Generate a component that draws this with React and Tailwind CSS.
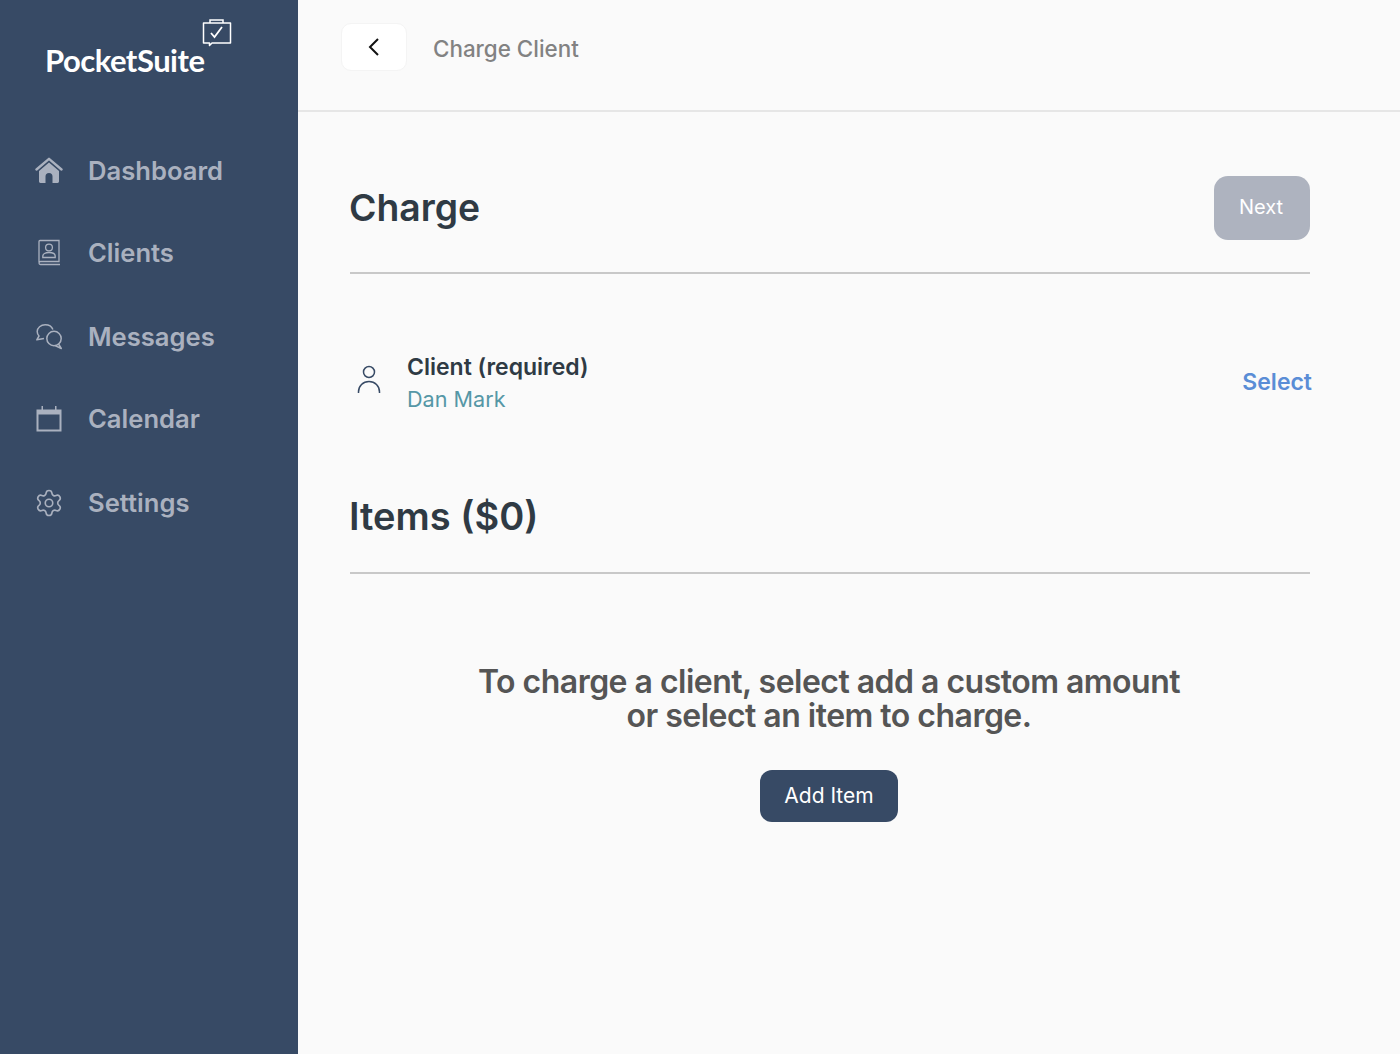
import React from "react";
import { Settings } from "lucide-react";

const Home = () => (
  <svg width="28" height="28" viewBox="0 0 28 28" fill="none">
    <path d="M1.500 12.500 14 1.800l12.500 10.700" stroke="#AAB1BF" strokeWidth="2.400" strokeLinecap="round" strokeLinejoin="round" />
    <path d="M4 14 14 5.600 24 14v10.500a1.400 1.400 0 0 1-1.400 1.400H17.500V19.500a3.500 3.500 0 0 0-7 0V25.900H5.400A1.400 1.400 0 0 1 4 24.500z" fill="#AAB1BF" />
  </svg>
);
const Book = () => (
  <svg width="28" height="28" viewBox="0 0 28 28" fill="none" stroke="#AAB1BF" strokeWidth="1.300">
    <path d="M4 23V2.500A1 1 0 0 1 5 1.500h19v21H5.500A1.500 1.500 0 0 0 4 24a1.500 1.500 0 0 0 1.500 1.500h19.500" />
    <circle cx="14" cy="8.500" r="3.400" />
    <path d="M7.800 18.500v-1.300c0-2.300 2.500-3.700 6.200-3.700s6.200 1.400 6.200 3.700v1.300z" />
  </svg>
);
const Chat = () => (
  <svg width="28" height="28" viewBox="0 0 28 28" fill="none" stroke="#AAB1BF" strokeWidth="1.500" strokeLinejoin="round">
    <path d="M9 15.500 1.800 16.800 4 13C2.800 11.700 2.200 10.200 2.200 8.600 2.200 4.800 5.800 1.800 10.200 1.800c3.600 0 6.700 2 7.700 4.800" />
    <circle cx="19" cy="15.500" r="7.200" />
    <path d="M23.500 21l2.800 4.500-6.300-3" />
  </svg>
);
const Cal = () => (
  <svg width="28" height="28" viewBox="0 0 28 28" fill="none">
    <path d="M1.500 4.500h5V1h1.500v3.500h12V1H21.500v3.500h5V26.500h-25z" fill="#AAB1BF" />
    <rect x="3.500" y="9.500" width="21" height="15" fill="#374A65" />
  </svg>
);
const Gear = () => <Settings size={30} strokeWidth={1.300} color="#AAB1BF" className="mx-[-1px]" />;

const items = [
  { label: "Dashboard", Icon: Home, m: "mt-[11px]" },
  { label: "Clients", Icon: Book, m: "mt-[22px]" },
  { label: "Messages", Icon: Chat, m: "mt-[24px]" },
  { label: "Calendar", Icon: Cal, m: "mt-[22px]" },
  { label: "Settings", Icon: Gear, m: "mt-[24px]" },
];

export default function App() {
  return (
    <div className="flex min-h-[1054px] bg-[#FAFAFA] font-['Inter',sans-serif]">
      <aside className="w-[298px] shrink-0 bg-[#374A65]">
        <div className="relative h-[130px]">
          <span className="absolute left-[45px] top-[41px] text-[31px] leading-[38px] font-bold tracking-[-0.5px] text-white font-['Lato',sans-serif]">
            PocketSuite
          </span>
          <svg className="absolute left-[202px] top-[18px]" width="30" height="30" viewBox="0 0 30 30" fill="none" stroke="white" strokeWidth="1.500">
            <path d="M8 5V2h13v3" />
            <path d="M1.500 5h27v20H10l-2.500 2.500V25h-6z" strokeLinejoin="round" />
            <path d="M9 15l3.500 4L20 9" strokeWidth="1.800" />
          </svg>
        </div>
        <nav className="flex flex-col">
          {items.map(({ label, Icon, m }) => (
            <div key={label} className={`flex h-[60px] items-center pl-[35px] ${m}`}>
              <Icon />
              <span className="ml-[25px] text-[25.6px] font-semibold text-[#AAB1BF]">{label}</span>
            </div>
          ))}
        </nav>
      </aside>
      <main className="flex-1">
        <header className="flex h-[112px] items-center border-b-2 border-[#E6E6E6] pl-[43px] pb-[16px]">
          <div className="flex h-[48px] w-[66px] items-center justify-center rounded-[10px] border border-[#F4F4F4] bg-white">
            <svg width="14" height="20" viewBox="0 0 14 20" fill="none" stroke="#111" strokeWidth="2">
              <path d="M11 2 3 10l8 8" />
            </svg>
          </div>
          <span className="ml-[26px] mt-[4px] text-[22.4px] font-medium text-[#828282]">Charge Client</span>
        </header>
        <div className="w-[960px] ml-[52px]">
          <div className="flex h-[162px] items-center justify-between border-b-2 border-[#C8C8C8] pt-[32px]">
            <h1 className="ml-[-1px] text-[37.3px] font-semibold text-[#2F3A44]">Charge</h1>
            <button className="h-[64px] w-[96px] rounded-[14px] bg-[#AEB3BF] pb-[2px] pr-[2px] text-[20px] text-white">Next</button>
          </div>
          <div className="flex items-center justify-between h-[111px] mt-[53px] mr-[-2px]">
            <div className="flex items-center">
              <svg className="ml-[6px] mt-[-6px]" width="26" height="32" viewBox="0 0 26 32" fill="none" stroke="#374A65" strokeWidth="1.500">
                <circle cx="13" cy="8" r="5.500" />
                <path d="M2.500 29v-1c0-6 4.500-10.500 10.500-10.500s10.500 4.500 10.500 10.500v1" />
              </svg>
              <div className="ml-[25px]">
                <div className="text-[23px] leading-[32px] font-semibold text-[#2F3A44]">Client (required)</div>
                <div className="text-[21.6px] leading-[32px] text-[#5597A6]">Dan Mark</div>
              </div>
            </div>
            <span className="text-[23px] font-semibold text-[#5A8DD6]">Select</span>
          </div>
          <div className="flex h-[113px] items-center border-b-2 border-[#C8C8C8] mt-[23px]">
            <h2 className="ml-[-1px] text-[38px] font-semibold text-[#2F3A44]">Items ($0)</h2>
          </div>
          <p className="mt-[91px] text-center text-[32px] leading-[34px] font-semibold text-[#555555] tracking-[-0.52px] pr-[2px]">
            To charge a client, select add a custom amount
            <br />
            or select an item to charge.
          </p>
          <div className="mt-[37px] flex justify-center pr-[2px]">
            <button className="h-[52px] w-[138px] rounded-[12px] bg-[#374A65] text-[21px] text-white">Add Item</button>
          </div>
        </div>
      </main>
    </div>
  );
}
